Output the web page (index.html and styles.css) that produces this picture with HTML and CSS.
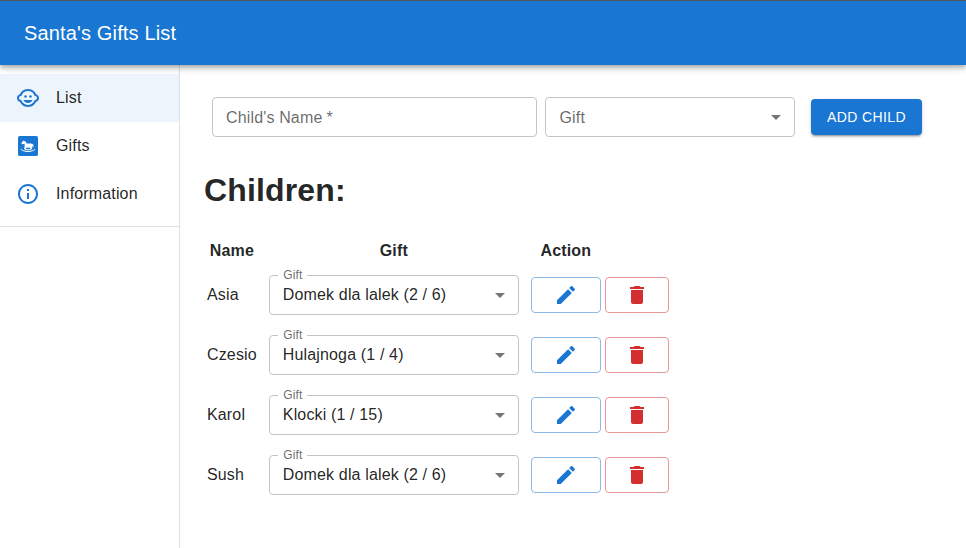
FILE: index.html
```html
<!DOCTYPE html>
<html lang="en">
<head>
<meta charset="utf-8">
<title>Santa's Gifts List</title>
<link rel="stylesheet" href="styles.css">
</head>
<body>
<svg class="defs" aria-hidden="true">
  <symbol id="face" viewBox="0 0 24 24"><circle cx="14.5" cy="10.5" r="1.25"/><circle cx="9.5" cy="10.5" r="1.25"/><path d="M22.94 11.34c-.25-1.51-1.36-2.74-2.81-3.17-.53-1.12-1.28-2.1-2.19-2.91C16.36 3.85 14.28 3 12 3s-4.36.85-5.94 2.26c-.92.81-1.67 1.8-2.19 2.91-1.45.43-2.56 1.65-2.81 3.17-.04.21-.06.43-.06.66s.02.45.06.66c.25 1.51 1.36 2.74 2.81 3.17.52 1.11 1.27 2.09 2.17 2.89C7.62 20.14 9.71 21 12 21s4.38-.86 5.97-2.28c.9-.8 1.65-1.79 2.17-2.89 1.44-.43 2.55-1.65 2.8-3.17.04-.21.06-.43.06-.66s-.02-.45-.06-.66zM19 14c-.1 0-.19-.02-.29-.03-.2.67-.49 1.29-.86 1.86C16.6 17.74 14.45 19 12 19s-4.6-1.26-5.85-3.17c-.37-.57-.66-1.19-.86-1.86-.1.01-.19.03-.29.03-1.1 0-2-.9-2-2s.9-2 2-2c.1 0 .19.02.29.03.2-.67.49-1.29.86-1.86C7.4 6.26 9.55 5 12 5s4.6 1.26 5.85 3.17c.37.57.66 1.19.86 1.86.1-.01.19-.03.29-.03 1.1 0 2 .9 2 2s-.9 2-2 2zM7.5 14c.76 1.77 2.49 3 4.5 3s3.74-1.23 4.5-3h-9z"/></symbol>
  <symbol id="horse" viewBox="0 0 24 24"><rect x="2" y="2" width="20" height="20" rx="1.8"/><path class="cut" d="M5.300 9.200 6.600 7.400 7 6.500l.8.500c1.500 0 2.300.8 2.700 2.400h4.300c1.600 0 2.700.8 2.700 2.300v1.500h-1v-1.200l-.7 1 .5 2.200h-1.600L14 13.700h-3.500l-.8 1.500H8l.6-2.400V9.700l-2.500.6z"/><path class="cut" d="m5.600 14.500.1.900c1.600 1.200 3.700 1.300 6.300 1.300s4.700-.1 6.300-1.300l.1-.9.9.7c-1.300 2-3.700 2.700-7.300 2.700s-6-.7-7.300-2.700z"/><path class="cut" d="M9 15.200h6v.8H9z"/></symbol>
  <symbol id="info" viewBox="0 0 24 24"><path d="M11 7h2v2h-2zm0 4h2v6h-2zm1-9C6.480 2 2 6.480 2 12s4.480 10 10 10 10-4.480 10-10S17.520 2 12 2zm0 18c-4.410 0-8-3.590-8-8s3.590-8 8-8 8 3.590 8 8-3.590 8-8 8z"/></symbol>
  <symbol id="arrow" viewBox="0 0 24 24"><path d="m7 10 5 5 5-5z"/></symbol>
  <symbol id="edit" viewBox="0 0 24 24"><path d="M3 17.250V21h3.750L17.810 9.940l-3.750-3.750L3 17.250zM20.710 7.040c.39-.39.39-1.020 0-1.410l-2.340-2.340a.9959.9959 0 0 0-1.410 0l-1.830 1.830 3.750 3.750 1.830-1.830z"/></symbol>
  <symbol id="trash" viewBox="0 0 24 24"><path d="M6 19c0 1.100.9 2 2 2h8c1.100 0 2-.9 2-2V7H6v12zM19 4h-3.500l-1-1h-5l-1 1H5v2h14V4z"/></symbol>
</svg>
<header class="appbar"><span class="brand">Santa's Gifts List</span></header>
<div class="layout">
  <nav class="sidebar">
    <a class="item selected"><svg class="icon"><use href="#face"/></svg><span>List</span></a>
    <a class="item"><svg class="icon"><use href="#horse"/></svg><span>Gifts</span></a>
    <a class="item"><svg class="icon"><use href="#info"/></svg><span>Information</span></a>
    <hr class="divider">
  </nav>
  <main class="content">
    <form class="form">
      <div class="field name-field"><span class="placeholder">Child's Name<span class="star">*</span></span></div>
      <div class="field select"><span class="placeholder">Gift</span><svg class="icon arrow"><use href="#arrow"/></svg></div>
      <button type="button" class="add">ADD CHILD</button>
    </form>
    <h1 class="heading">Children:</h1>
    <table class="children">
      <thead><tr><th>Name</th><th>Gift</th><th>Action</th><th></th></tr></thead>
      <tbody>
        <tr><td>Asia</td><td><div class="field select row-select"><span class="label">Gift</span><span>Domek dla lalek (2 / 6)</span><svg class="icon arrow"><use href="#arrow"/></svg></div></td><td><button class="btn edit" aria-label="Edit"><svg class="icon"><use href="#edit"/></svg></button></td><td><button class="btn delete" aria-label="Delete"><svg class="icon"><use href="#trash"/></svg></button></td></tr>
        <tr><td>Czesio</td><td><div class="field select row-select"><span class="label">Gift</span><span>Hulajnoga (1 / 4)</span><svg class="icon arrow"><use href="#arrow"/></svg></div></td><td><button class="btn edit" aria-label="Edit"><svg class="icon"><use href="#edit"/></svg></button></td><td><button class="btn delete" aria-label="Delete"><svg class="icon"><use href="#trash"/></svg></button></td></tr>
        <tr><td>Karol</td><td><div class="field select row-select"><span class="label">Gift</span><span>Klocki (1 / 15)</span><svg class="icon arrow"><use href="#arrow"/></svg></div></td><td><button class="btn edit" aria-label="Edit"><svg class="icon"><use href="#edit"/></svg></button></td><td><button class="btn delete" aria-label="Delete"><svg class="icon"><use href="#trash"/></svg></button></td></tr>
        <tr><td>Sush</td><td><div class="field select row-select"><span class="label">Gift</span><span>Domek dla lalek (2 / 6)</span><svg class="icon arrow"><use href="#arrow"/></svg></div></td><td><button class="btn edit" aria-label="Edit"><svg class="icon"><use href="#edit"/></svg></button></td><td><button class="btn delete" aria-label="Delete"><svg class="icon"><use href="#trash"/></svg></button></td></tr>
      </tbody>
    </table>
  </main>
</div>
</body>
</html>
```
FILE: styles.css
```css
* { box-sizing: border-box; }
body {
  margin: 0;
  height: 548px;
  display: flex;
  flex-direction: column;
  overflow: hidden;
  background: #fff;
  color: rgba(0, 0, 0, 0.87);
  font: 16px/24px "Liberation Sans", Arial, sans-serif;
  letter-spacing: 0.15px;
}
.defs { display: none; }
.icon { width: 24px; height: 24px; flex: none; fill: currentColor; }
.cut { fill: #fff; }
.appbar {
  position: relative;
  z-index: 1;
  height: 65px;
  flex: none;
  display: flex;
  align-items: center;
  padding: 0 24px 1px;
  border-top: 1px solid #565656;
  background: #1976d2;
  color: #fff;
  box-shadow: 0 2px 4px -1px rgba(0,0,0,.2), 0 4px 5px rgba(0,0,0,.14), 0 1px 10px rgba(0,0,0,.12);
}
.brand { font-size: 20px; line-height: 32px; }
.layout { flex: 1; display: flex; }
.sidebar {
  width: 180px;
  flex: none;
  padding-top: 9px;
  border-right: 1px solid #e0e0e0;
}
.item { display: flex; align-items: center; gap: 16px; height: 48px; padding: 0 16px; }
.item .icon { color: #1976d2; }
.selected { background: #edf4fb; }
.divider { margin: 8px 0 0; border: 0; border-top: 1px solid #e0e0e0; }
.content { flex: 1; padding: 32px 24px 0; }
.form { display: flex; align-items: center; padding-left: 8px; }
.field {
  position: relative;
  display: flex;
  align-items: center;
  height: 40px;
  padding: 0 13px 1px;
  border: 1px solid #c4c4c4;
  border-radius: 4px;
}
.name-field { width: 325px; margin-right: 8px; }
.select { width: 250px; justify-content: space-between; padding-right: 6px; }
.arrow { color: rgba(0, 0, 0, 0.54); margin-top: 1px; }
.placeholder { padding-top: 2px; color: rgba(0, 0, 0, 0.6); }
.select .placeholder { padding-left: 0.5px; }
.star { margin-left: 4px; }
.add {
  width: 111px;
  height: 36px;
  margin-left: 16px;
  padding: 0;
  border: 0;
  border-radius: 4px;
  background: #1976d2;
  color: #fff;
  font: 14px/24px "Liberation Sans", Arial, sans-serif;
  letter-spacing: 0.4px;
  box-shadow: 0 3px 1px -2px rgba(0,0,0,.2), 0 2px 2px rgba(0,0,0,.14), 0 1px 5px rgba(0,0,0,.12);
}
.heading { margin: 29px 0 22px; font-size: 32px; line-height: 48px; letter-spacing: 0.15px; }
.children { border-spacing: 2px; border-collapse: separate; }
.children th, .children td { padding: 1px; }
.row-select { margin: 8px; }
.label {
  position: absolute;
  left: 8px;
  top: -12px;
  padding: 0 4.5px 0 5.5px;
  background: #fff;
  color: rgba(0, 0, 0, 0.6);
  font-size: 12px;
  line-height: 23px;
  letter-spacing: 0.11px;
}
.btn {
  display: flex;
  align-items: center;
  justify-content: center;
  height: 36px;
  padding: 0;
  border-radius: 4px;
  background: #fff;
}
.edit { width: 70px; border: 1px solid #8cbae8; color: #1976d2; }
.delete { width: 64px; border: 1px solid #e99696; color: #d32f2f; }
```
